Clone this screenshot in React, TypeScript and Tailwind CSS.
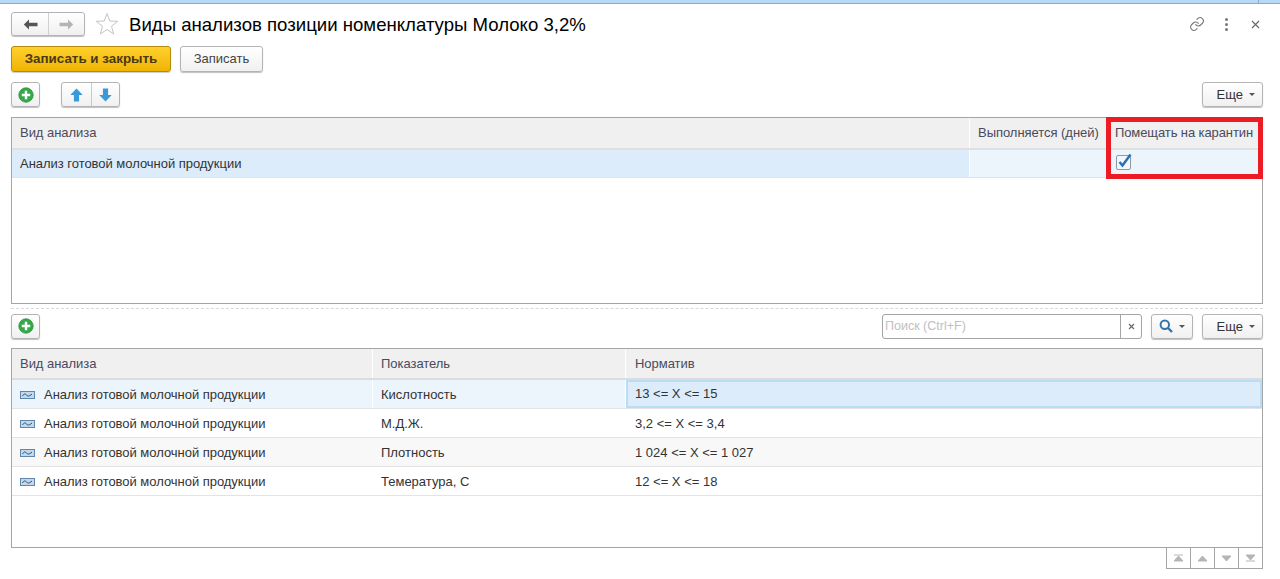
import React from "react";

const btn = "bg-gradient-to-b from-white to-[#f0f0f0] border border-[#b4b4b4] rounded-[3px] shadow-[0_1px_1px_rgba(0,0,0,0.25)]";

function Plus() {
  return (
    <svg width="16" height="16" viewBox="0 0 16 16">
      <circle cx="8" cy="8" r="7.2" fill="#35a94a" stroke="#2b8f3d" strokeWidth="0.8" />
      <path d="M8 3.8v8.4M3.8 8h8.4" stroke="#fff" strokeWidth="2.4" />
    </svg>
  );
}

function Caret() {
  return <span className="inline-block w-0 h-0 border-l-[3px] border-r-[3px] border-t-[3px] border-l-transparent border-r-transparent border-t-[#555]" />;
}

function More() {
  return (
    <div className={`${btn} w-[61px] h-[25px] flex items-center justify-end gap-[6px] pr-[7px] text-[13px] text-[#333]`}>
      <span className="pt-[1px]">Еще</span>
      <Caret />
    </div>
  );
}

function AddBtn() {
  return (
    <div className={`${btn} w-[29px] h-[25px] flex items-center justify-center`}>
      <Plus />
    </div>
  );
}

function Series() {
  return (
    <svg width="15" height="8" viewBox="0 0 15 8" className="shrink-0">
      <rect x="0.5" y="0.5" width="14" height="7" fill="#c5d8ea" stroke="#5f87ad" />
      <path d="M2.5 5c1.5-2.5 2.5-2.5 4-1s2.5 1.5 5.5-1" fill="none" stroke="#1f4f80" strokeWidth="1" />
    </svg>
  );
}

const head = "bg-[#f0f0f0] flex items-center text-[#4b4a5a] tracking-[-0.04px]";
const rows = [
  ["Кислотность", "13 <= X <= 15"],
  ["М.Д.Ж.", "3,2 <= X <= 3,4"],
  ["Плотность", "1 024 <= X <= 1 027"],
  ["Темература, С", "12 <= X <= 18"],
];

export default function App() {
  return (
    <div className="w-[1280px] h-[579px] overflow-hidden bg-white text-[13px] text-[#333] font-['Liberation_Sans',Arial,sans-serif] flex flex-col">
      <div className="h-[4px] bg-[#b8d9f5] border-b border-[#8fa9bf] shrink-0 flex justify-end">
        <div className="w-[22px] border-l border-[#8fa9bf]" />
      </div>
      <div className="h-[24px] mt-[8px] pl-[11px] pr-[20px] flex items-center shrink-0">
        <div className={`${btn} w-[74px] h-[24px] flex items-center`}>
          <div className="w-[37px] h-full flex items-center justify-center border-r border-[#d0d0d0]">
            <svg width="15" height="11" viewBox="0 0 15 11"><path d="M6 0.5 L0.8 5.5 L6 10.5 V7.2 H14.5 V3.8 H6 Z" fill="#555" /></svg>
          </div>
          <div className="flex-1 flex items-center justify-center">
            <svg width="15" height="11" viewBox="0 0 15 11"><path d="M9 0.5 L14.2 5.5 L9 10.5 V7.2 H0.5 V3.8 H9 Z" fill="#b4b4b4" /></svg>
          </div>
        </div>
        <svg width="24" height="24" viewBox="0 0 24 24" className="ml-[10px]">
          <path d="M12 1.5 L14.8 9 L22.8 9.3 L16.5 14.2 L18.7 22 L12 17.5 L5.3 22 L7.5 14.2 L1.2 9.3 L9.2 9 Z" fill="#fff" stroke="#c4c4c4" strokeWidth="1" />
        </svg>
        <div className="ml-[10px] pt-[2px] text-[18.6px] text-black leading-[24px]">Виды анализов позиции номенклатуры Молоко 3,2%</div>
        <div className="ml-auto flex items-center">
          <svg width="16" height="16" viewBox="0 0 24 24" fill="none" stroke="#777" strokeWidth="1.6" strokeLinecap="round" strokeLinejoin="round">
            <path d="M10 13a5 5 0 0 0 7.5.5l3-3a5 5 0 0 0-7-7l-1.7 1.7" />
            <path d="M14 11a5 5 0 0 0-7.5-.5l-3 3a5 5 0 0 0 7 7l1.7-1.7" />
          </svg>
          <div className="ml-[20px] w-[3px] flex flex-col gap-[2px]">
            <span className="h-[3px] bg-[#777] rounded-full" />
            <span className="h-[3px] bg-[#777] rounded-full" />
            <span className="h-[3px] bg-[#777] rounded-full" />
          </div>
          <svg width="9" height="9" viewBox="0 0 9 9" className="ml-[23px]"><path d="M1 1l7 7M8 1l-7 7" stroke="#666" strokeWidth="1.1" /></svg>
        </div>
      </div>

      <div className="h-[26px] mt-[10px] pl-[11px] flex gap-[9px] shrink-0">
        <div className="w-[160px] h-[26px] rounded-[3px] border border-[#b58a0c] bg-gradient-to-b from-[#ffd02a] to-[#f0b400] shadow-[0_1px_1px_rgba(0,0,0,0.2)] flex items-center justify-center font-bold text-[13.4px] text-[#4a3b10]">
          Записать и закрыть
        </div>
        <div className={`${btn} w-[83px] h-[26px] flex items-center justify-center text-[#444]`}>Записать</div>
      </div>

      <div className="h-[25px] mt-[10px] pl-[11px] pr-[17px] flex items-center shrink-0">
        <AddBtn />
        <div className={`${btn} ml-[21px] w-[59px] h-[25px] flex items-center`}>
          <div className="w-[30px] h-full flex items-center justify-center border-r border-[#c8c8c8]">
            <svg width="13" height="14" viewBox="0 0 12 13"><path d="M6 0.5L11.8 6.5H8.4V12.5H3.6V6.5H0.2Z" fill="#3a9ad9" /></svg>
          </div>
          <div className="flex-1 flex items-center justify-center">
            <svg width="13" height="14" viewBox="0 0 12 13"><path d="M6 12.5L11.8 6.5H8.4V0.5H3.6V6.5H0.2Z" fill="#3a9ad9" /></svg>
          </div>
        </div>
        <div className="ml-auto"><More /></div>
      </div>

      <div className="relative mt-[10px] mx-[11px] w-[1252px] h-[187px] border border-[#a5a5a5] shrink-0">
        <div className="grid grid-cols-[957px_138px_1fr] border-b-2 border-[#e0e0e0] gap-x-[1px] bg-white">
          <div className={`${head} h-[30px] px-2`}>Вид анализа</div>
          <div className={`${head} h-[30px] px-2`}>Выполняется (дней)</div>
          <div className={`${head} h-[30px] pl-[6px]`}><span className="whitespace-nowrap tracking-[-0.1px]">Помещать на карантин</span></div>
        </div>
        <div className="grid grid-cols-[957px_138px_1fr] gap-x-[1px] h-[28px] border-b border-[#e3e3e3]">
          <div className="bg-[#dcecfb] flex items-center px-2 tracking-[-0.03px]">Анализ готовой молочной продукции</div>
          <div className="bg-[#edf5fc]" />
          <div className="bg-[#edf5fc] flex items-start pl-[7px] pt-[3px]">
            <svg width="16" height="17" viewBox="0 0 16 17">
              <rect x="0.5" y="2.5" width="14" height="14" rx="1.5" fill="#f4f6f8" stroke="#8a9aaa" />
              <path d="M3.5 9l3 3.5L14.5 1.5" fill="none" stroke="#2a70b8" strokeWidth="2.4" />
            </svg>
          </div>
        </div>
        <div className="absolute left-[1094px] top-[-1px] w-[157px] h-[62px] border-[5px] border-[#ed1c24]" />
      </div>

      <div className="mt-[4px] mx-[11px] w-[1252px] border-t border-dashed border-[#d8d8d8] shrink-0" />

      <div className="h-[26px] mt-[4px] pl-[11px] pr-[17px] flex items-center shrink-0">
        <AddBtn />
        <div className="ml-auto w-[260px] h-[25px] border border-[#a5a5a5] rounded-[3px] flex bg-white">
          <div className="flex-1 flex items-center pl-[2px] text-[#c0c0c0] text-[12.5px]">Поиск (Ctrl+F)</div>
          <div className="w-[21px] border-l border-[#a5a5a5] flex items-center justify-center">
            <svg width="7" height="7" viewBox="0 0 7 7"><path d="M1 1l5 5M6 1l-5 5" stroke="#666" strokeWidth="1.1" /></svg>
          </div>
        </div>
        <div className={`${btn} ml-[9px] w-[42px] h-[25px] flex items-center justify-center gap-[6px]`}>
          <svg width="14" height="14" viewBox="0 0 14 14" fill="none" stroke="#2f74ad" strokeWidth="2">
            <circle cx="5.8" cy="5.8" r="4.2" />
            <path d="M9 9l4 4" strokeWidth="2.4" />
          </svg>
          <Caret />
        </div>
        <div className="ml-[9px]"><More /></div>
      </div>

      <div className="mt-[9px] mx-[11px] w-[1252px] h-[200px] border border-[#a5a5a5] shrink-0">
        <div className="grid grid-cols-[360px_252px_1fr] gap-x-[1px] border-b-2 border-[#dcdcdc]">
          <div className={`${head} h-[29px] pt-[1px] px-2`}>Вид анализа</div>
          <div className={`${head} h-[29px] pt-[1px] px-2`}>Показатель</div>
          <div className={`${head} h-[29px] pt-[1px] pl-[9px]`}>Норматив</div>
        </div>
        {rows.map((r, i) => (
          <div key={r[0]} className={`grid grid-cols-[360px_252px_1fr] gap-x-[1px] h-[29px] border-b border-[#e3e3e3] ${i === 2 ? "bg-[#f8f8f8]" : ""}`}>
            <div className={`flex items-center gap-[9px] pl-[8px] pt-[1px] tracking-[-0.03px] ${i === 0 ? "bg-[#edf5fc]" : ""}`}>
              <Series />
              <span>Анализ готовой молочной продукции</span>
            </div>
            <div className={`flex items-center px-2 pt-[1px] ${i === 0 ? "bg-[#edf5fc]" : ""}`}>{r[0]}</div>
            <div className={`flex items-center ${i === 0 ? "bg-[#dcecfb] border-2 border-[#b9dcf7] pl-[7px]" : "pl-[9px] pt-[1px]"}`}>{r[1]}</div>
          </div>
        ))}
      </div>

      <div className="mr-[17px] ml-auto flex h-[21px] border border-t-0 border-[#a5a5a5] shrink-0">
        {[
          "M3 2h9M7.5 3L3 8h9Z",
          "M7.5 3L3 8h9Z",
          "M7.5 8L3 3h9Z",
          "M7.5 7L3 2h9ZM3 8h9",
        ].map((d, i) => (
          <div key={i} className={`flex items-center justify-center ${i < 3 ? "w-[24px] border-r border-[#a5a5a5]" : "w-[23px]"}`}>
            <svg width="15" height="10" viewBox="0 0 15 10"><path d={d} fill="#b5b5b5" stroke="#b5b5b5" strokeWidth="1" /></svg>
          </div>
        ))}
      </div>
    </div>
  );
}
